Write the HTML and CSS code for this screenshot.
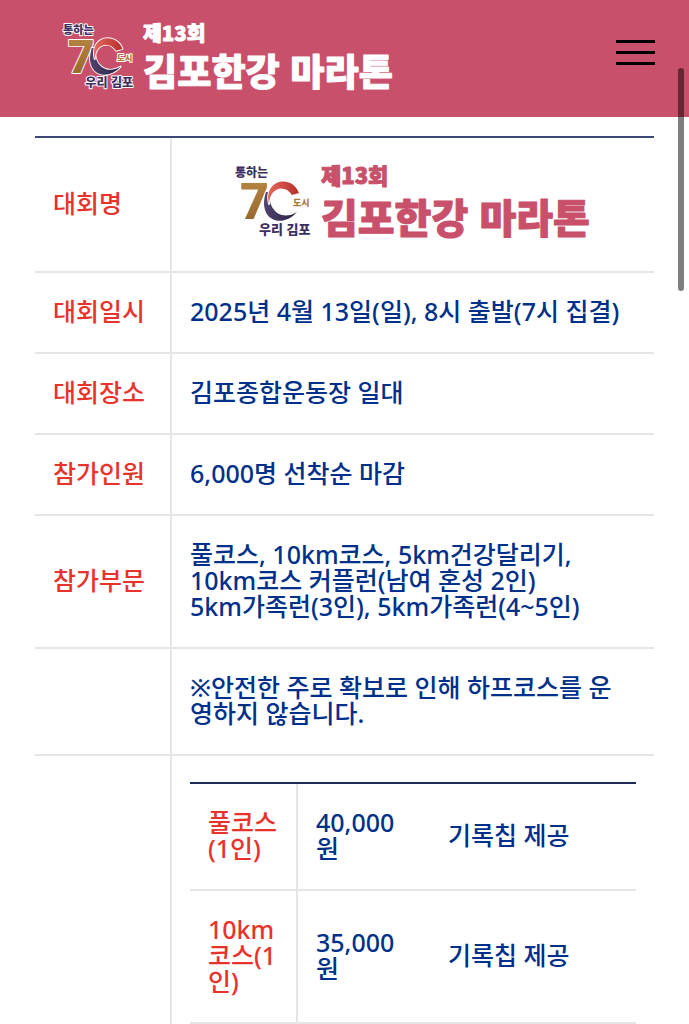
FILE: index.html
```html
<!DOCTYPE html>
<html lang="ko">
<head>
    <meta charset="UTF-8">
    <meta name="viewport" content="width=device-width, initial-scale=1">
    <title>제13회 김포한강 마라톤</title>
    <link rel="stylesheet" href="styles.css">
</head>
<body>
    <header class="header">
        <a href="#" class="header-logo" aria-label="제13회 김포한강 마라톤">
            <svg class="logo" viewBox="0 -1 357 80">
                <defs>
                    <linearGradient id="gold" x1="0" y1="0" x2="0" y2="1">
                        <stop offset="0" stop-color="#bb8a45"/>
                        <stop offset="1" stop-color="#91602a"/>
                    </linearGradient>
                    <linearGradient id="red" x1="0" y1="0" x2="1" y2="0">
                        <stop offset="0" stop-color="#e4685c"/>
                        <stop offset="1" stop-color="#b52f2b"/>
                    </linearGradient>
                    <linearGradient id="navy" x1="0" y1="0" x2="1" y2="0">
                        <stop offset="0" stop-color="#51436f"/>
                        <stop offset="1" stop-color="#292443"/>
                    </linearGradient>
                </defs>
                <g id="logo">
                    <text class="logo-seven" x="5" y="55">7</text>
                    <path class="ring ring-navy" d="M31 28C22 55 46 66 62 48C46 58 32 45 35 28Z"/>
                    <path class="ring ring-red" d="M34 40C28 15 57 10 64 29L57 31C50 20 35 23 34 40Z"/>
                    <text class="logo-word" x="0" y="13">통하는</text>
                    <text class="logo-city" x="58" y="42">도시</text>
                    <text class="logo-word logo-gimpo" x="24" y="70">우리 김포</text>
                    <text class="logo-count" x="86" y="20">제13회</text>
                    <text class="logo-title" x="86" y="69">김포한강 마라톤</text>
                </g>
            </svg>
        </a>
        <button class="menu-btn" type="button" aria-label="메뉴">
            <span></span>
            <span></span>
            <span></span>
        </button>
    </header>

    <main class="content">
        <table class="info">
            <tbody>
                <tr>
                    <th scope="row">대회명</th>
                    <td>
                        <svg class="logo logo-pink" viewBox="0 -1 357 80" role="img" aria-label="제13회 김포한강 마라톤">
                            <use href="#logo"/>
                        </svg>
                    </td>
                </tr>
                <tr>
                    <th scope="row">대회일시</th>
                    <td>2025년 4월 13일(일), 8시 출발(7시 집결)</td>
                </tr>
                <tr>
                    <th scope="row">대회장소</th>
                    <td>김포종합운동장 일대</td>
                </tr>
                <tr>
                    <th scope="row">참가인원</th>
                    <td>6,000명 선착순 마감</td>
                </tr>
                <tr>
                    <th scope="row">참가부문</th>
                    <td>
                        풀코스, 10km코스, 5km건강달리기,<br>
                        10km코스 커플런(남여 혼성 2인)<br>
                        5km가족런(3인), 5km가족런(4~5인)
                    </td>
                </tr>
                <tr>
                    <th></th>
                    <td>※안전한 주로 확보로 인해 하프코스를 운<br>영하지 않습니다.</td>
                </tr>
                <tr>
                    <th></th>
                    <td class="fee-cell">
                        <!-- 참가비 -->
                        <table class="info fee">
                            <tbody>
                                <tr>
                                    <th scope="row">풀코스(1인)</th>
                                    <td class="price">40,000원</td>
                                    <td>기록칩 제공</td>
                                </tr>
                                <tr>
                                    <th scope="row">10km코스(1인)</th>
                                    <td class="price">35,000원</td>
                                    <td>기록칩 제공</td>
                                </tr>
                            </tbody>
                        </table>
                    </td>
                </tr>
            </tbody>
        </table>
    </main>
    <div class="scroll-thumb"></div>
</body>
</html>
```

FILE: styles.css
```css
* {
    box-sizing: border-box;
}
html {
    scrollbar-width: none;
}
body {
    margin: 0;
    background: #fff;
    font-family: "Noto Sans", "Noto Sans CJK KR", sans-serif;
    font-size: 25px;
    line-height: 26px;
}

/* 상단 */
.header {
    display: flex;
    align-items: center;
    justify-content: space-between;
    height: 117px;
    padding: 0 34px 0 63px;
    background: #c9506b;
}
.header-logo {
    width: 332px;
    color: #fff;
}
.menu-btn {
    display: flex;
    flex-direction: column;
    gap: 8px;
    width: 39px;
    margin-bottom: 13px;
    padding: 0;
    border: 0;
    background: none;
    cursor: pointer;
}
.menu-btn span {
    width: 100%;
    height: 3px;
    background: #000;
}

/* 로고 */
.logo {
    display: block;
    width: 100%;
    overflow: visible;
    font-family: "Noto Sans CJK KR", sans-serif;
    font-weight: 900;
}
.logo-pink {
    max-width: 357px;
    margin: 0 auto;
    color: #c9506b;
}
.logo text,
.ring {
    paint-order: stroke;
    stroke: #fff;
    stroke-width: 2px;
    stroke-linejoin: round;
}
.ring-navy {
    fill: url(#navy);
}
.ring-red {
    fill: url(#red);
}
.logo-word {
    font-size: 12px;
    fill: #3d3060;
}
.logo .logo-gimpo {
    font-size: 13px;
}
.logo-city {
    font-size: 9px;
    fill: #a87a3c;
}
.logo-seven {
    font-family: Roboto, sans-serif;
    font-size: 50px;
    font-weight: 900;
    fill: url(#gold);
}
.logo .logo-count,
.logo .logo-title {
    fill: currentColor;
    stroke: currentColor;
    stroke-width: 1px;
}
.logo-count {
    font-size: 22px;
}
.logo-title {
    font-size: 40px;
}

/* 대회 정보 표 */
.content {
    padding: 19px 35px 0;
}
.info {
    width: 100%;
    table-layout: fixed;
    border-collapse: separate;
    border-spacing: 0;
    border-top: 2px solid #3c4875;
}
.info th,
.info td {
    padding: 25px 18px 28px;
    border-bottom: 2px solid #e5e5e5;
    text-align: left;
    vertical-align: middle;
    font-weight: 500;
}
.info th {
    width: 137px;
    border-right: 2px solid #e5e5e5;
    color: #e8332c;
}
.info td {
    color: #00308a;
}
.info .fee-cell {
    padding-top: 26px;
}
.fee {
    border-top-color: #1d2b57;
}
.fee th {
    width: 108px;
    padding-right: 16px;
}
.fee .price {
    width: 132px;
}

.scroll-thumb {
    position: fixed;
    top: 68px;
    right: 5px;
    width: 6px;
    height: 223px;
    border-radius: 3px;
    background: rgba(0, 0, 0, 0.5);
}
```
